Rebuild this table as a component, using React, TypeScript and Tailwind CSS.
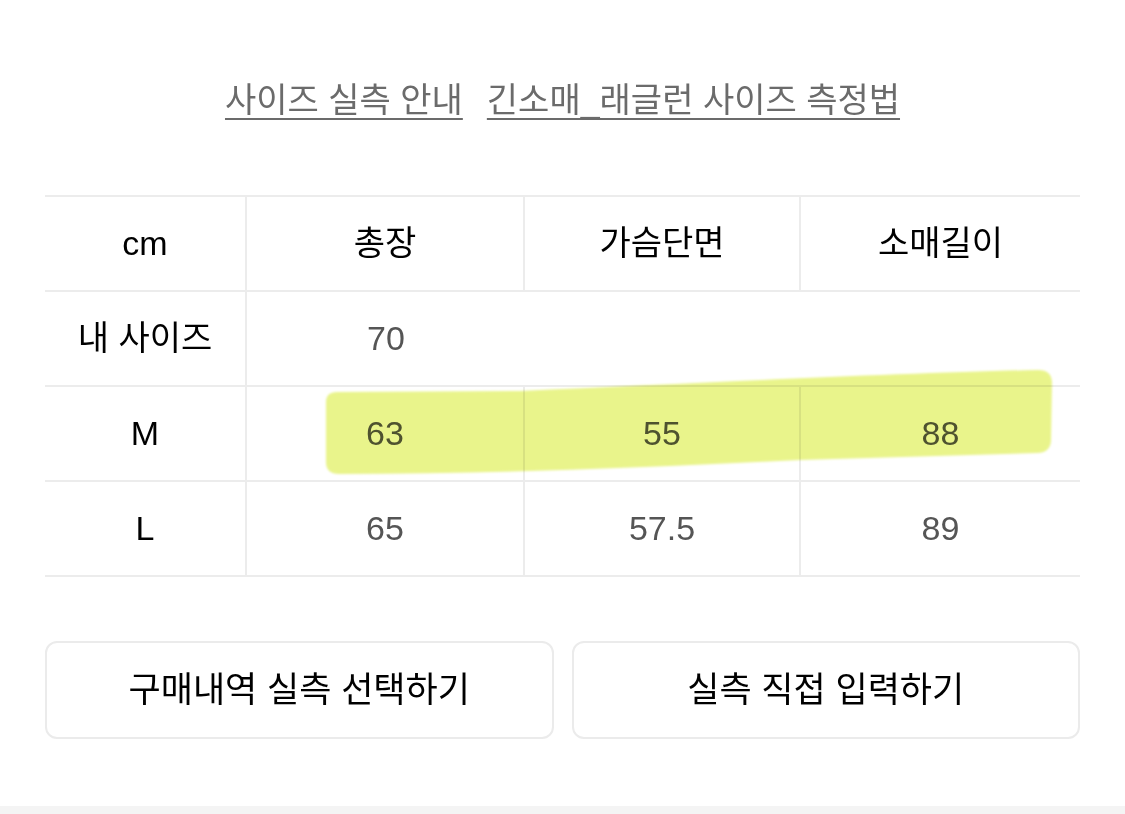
const FONT = "font-['Liberation_Sans','Noto_Sans_CJK_KR',sans-serif]"

const COLUMNS = ["총장", "가슴단면", "소매길이"]

const ROWS: { label: string; values: string[] }[] = [
  { label: "내 사이즈", values: ["70", "", ""] },
  { label: "M", values: ["63", "55", "88"] },
  { label: "L", values: ["65", "57.5", "89"] },
]

/** The marker stroke someone drew over the M row — lives over the table, so it's absolute. */
function Highlight() {
  return (
    <svg
      className="pointer-events-none absolute inset-0 mix-blend-multiply"
      width="1035"
      height="382"
      viewBox="0 0 1035 382"
    >
      <defs>
        <filter id="soft" x="-5%" y="-20%" width="110%" height="140%">
          <feGaussianBlur stdDeviation="1.2" />
        </filter>
      </defs>
      <path
        filter="url(#soft)"
        fill="#e9f48b"
        d="M 281 205 Q 281 195 292 195 L 475 194 C 655 186 855 176 993 173 Q 1007 173 1007 186 L 1006 244 Q 1005 256 992 256 L 755 263 C 605 270 455 277 294 277 Q 281 277 281 265 Z"
      />
    </svg>
  )
}

export default function App() {
  return (
    <div className={`flex h-[814px] w-[1125px] flex-col bg-white ${FONT}`}>
      <nav className="mt-[70px] flex h-[60px] items-center justify-center gap-[24px] text-[34px] text-[#6b6b6b]">
        <a className="underline decoration-2 underline-offset-[6px]">사이즈 실측 안내</a>
        <a className="underline decoration-2 underline-offset-[6px]">긴소매_래글런 사이즈 측정법</a>
      </nav>

      <div className="relative mx-[45px] mt-[65px] flex border-t-2 border-[#ececec]">
        <div className="w-[202px] shrink-0 border-r-2 border-[#ececec]">
          <div className="flex h-[95px] items-center justify-center border-b-2 border-[#ececec] text-[34px] text-black">
            cm
          </div>
          {ROWS.map(({ label }) => (
            <div
              key={label}
              className="flex h-[95px] items-center justify-center border-b-2 border-[#ececec] text-[34px] text-black"
            >
              {label}
            </div>
          ))}
        </div>
        <div className="grid flex-1 grid-cols-[278px_276px_1fr]">
          {COLUMNS.map((name, i) => (
            <div
              key={name}
              className={`flex h-[95px] items-center justify-center border-b-2 border-[#ececec] text-[34px] text-black ${i < 2 ? "border-r-2" : ""}`}
            >
              {name}
            </div>
          ))}
          {ROWS.map(({ label, values }) =>
            values.map((value, i) => (
              <div
                key={`${label}-${i}`}
                className={`flex h-[95px] items-center justify-center border-b-2 border-[#ececec] text-[34px] text-[#555555] ${label !== "내 사이즈" && i < 2 ? "border-r-2" : ""}`}
              >
                {value}
              </div>
            ))
          )}
        </div>
        <Highlight />
      </div>

      <div className="mx-[45px] mt-[64px] grid grid-cols-2 gap-[18px]">
        <button className="h-[98px] rounded-[12px] border-2 border-[#ebebeb] bg-white text-[35px] text-black">
          구매내역 실측 선택하기
        </button>
        <button className="h-[98px] rounded-[12px] border-2 border-[#ebebeb] bg-white text-[35px] text-black">
          실측 직접 입력하기
        </button>
      </div>

      <div className="flex-1" />
      <div className="h-[8px] bg-[#f4f4f4]" />
    </div>
  )
}
